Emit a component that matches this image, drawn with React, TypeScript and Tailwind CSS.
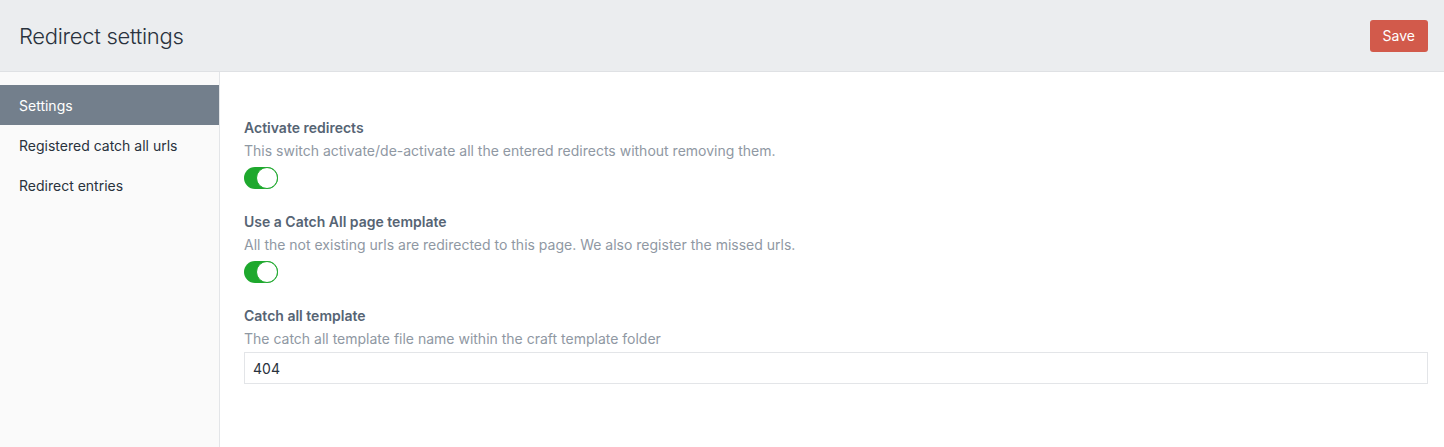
import React from "react";

function Toggle() {
  return (
    <div className="w-[34px] h-[22px] rounded-full bg-[#1ea82d] flex items-center justify-end">
      <div className="w-[22px] h-[22px] rounded-full bg-white border border-[#1ea82d]" />
    </div>
  );
}

function Field({ label, desc, children }: { label: string; desc: string; children: React.ReactNode }) {
  return (
    <div className="flex flex-col">
      <div className="text-[14px] leading-[20px] font-semibold text-[#566474]">{label}</div>
      <div className="text-[14px] leading-[20px] text-[#8f98a3] mt-[3px]">{desc}</div>
      <div className="mt-[6px]">{children}</div>
    </div>
  );
}

export default function App() {
  return (
    <div className="w-[1444px] h-[447px] flex flex-col bg-white text-[#29323d]" style={{ fontFamily: "Inter, 'Noto Sans', sans-serif" }}>
      <header className="h-[72px] shrink-0 bg-[#ebedef] border-b border-[#dfe1e4] flex items-center justify-between pl-[19px] pr-[16px]">
        <h1 className="text-[22px] font-light tracking-[-0.3px] text-[#29323d] leading-none pt-[1px]">Redirect settings</h1>
        <button className="h-[32px] px-[13px] rounded-[3px] bg-[#d25a4b] text-white text-[14px] leading-none">Save</button>
      </header>
      <div className="flex flex-1">
        <nav className="w-[220px] shrink-0 bg-[#fafafa] border-r border-[#e3e5e8] pt-[13px]">
          <div className="h-[40px] flex items-center pl-[19px] bg-[#737f8c] text-white text-[14px]">Settings</div>
          <div className="h-[40px] flex items-center pl-[19px] text-[14px] text-[#29323d]">Registered catch all urls</div>
          <div className="h-[40px] flex items-center pl-[19px] text-[14px] text-[#29323d]">Redirect entries</div>
        </nav>
        <main className="flex-1 pl-[24px] pr-[16px] pt-[46px] flex flex-col gap-[23px]">
          <Field label="Activate redirects" desc="This switch activate/de-activate all the entered redirects without removing them.">
            <Toggle />
          </Field>
          <Field label="Use a Catch All page template" desc="All the not existing urls are redirected to this page. We also register the missed urls.">
            <Toggle />
          </Field>
          <Field label="Catch all template" desc="The catch all template file name within the craft template folder">
            <div className="h-[32px] border border-[#e3e5e8] flex items-center px-[8px] text-[14px] text-[#29323d] -mt-[3px]">404</div>
          </Field>
        </main>
      </div>
    </div>
  );
}
